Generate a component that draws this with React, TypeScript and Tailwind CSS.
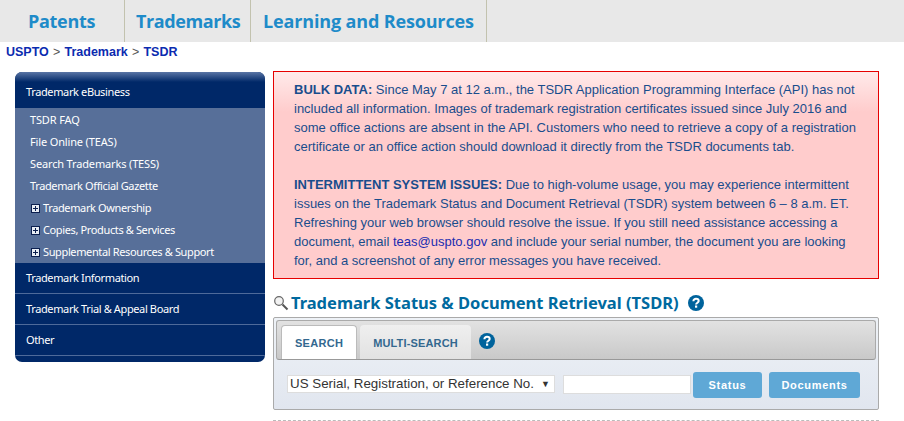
const sideFont = "font-['Noto_Sans','Open_Sans',sans-serif]";

function PlusBox() {
  return (
    <svg width="9" height="9" viewBox="0 0 9 9" className="shrink-0 ml-px mr-[3px]">
      <rect x="0.5" y="0.5" width="8" height="8" fill="#e8edf5" stroke="#0b1f4f" />
      <path d="M2 4.5H7M4.5 2V7" stroke="#0b1f4f" strokeWidth="1" />
    </svg>
  );
}

function Help({ size }: { size: number }) {
  return (
    <svg width={size} height={size} viewBox="0 0 16 16" className="shrink-0 block">
      <circle cx="8" cy="8" r="8" fill="#00639c" />
      <path d="M5.4 6.2C5.4 4.7 6.5 3.8 8 3.8S10.7 4.7 10.7 6C10.7 7.6 8.1 7.8 8.1 9.6" fill="none" stroke="#fff" strokeWidth="2" />
      <rect x="7" y="10.5" width="2.2" height="2.2" fill="#fff" />
    </svg>
  );
}

function SubLink({ label, plus, wide }: { label: string; plus?: boolean; wide?: boolean }) {
  return (
    <div className={`h-[22px] flex items-center pl-[15px] text-[11px] text-white whitespace-nowrap ${wide ? "tracking-[-0.15px]" : "tracking-[-0.37px]"}`}>
      {plus && <PlusBox />}
      <span>{label}</span>
    </div>
  );
}

function MainLink({ label }: { label: string }) {
  return (
    <div className="h-[31px] flex items-center pl-[11px] text-[11px] text-white border-b border-[#4e6a9a] tracking-[-0.37px] whitespace-nowrap">
      {label}
    </div>
  );
}

export default function App() {
  return (
    <div className="w-[904px] h-[421px] overflow-hidden bg-white font-['Liberation_Sans',Arial,sans-serif]">
      <header className="h-[42px] bg-[#e8e8e8] flex text-[#1e8bc9] text-[18px] font-bold font-['Open_Sans','Noto_Sans',sans-serif] whitespace-nowrap">
        <div className="w-[125px] border-r border-[#c2c2ae] pl-[28px] pt-[7px] leading-[28px] tracking-[-0.3px]">Patents</div>
        <div className="w-[126px] border-r border-[#c2c2ae] pl-[11px] pt-[7px] leading-[28px] tracking-[-0.4px]">Trademarks</div>
        <div className="w-[236px] border-r border-[#c2c2ae] pl-[12px] pt-[7px] leading-[28px] tracking-[-0.15px]">Learning and Resources</div>
      </header>

      <div className="h-[19px] pl-[6px] pt-[3px] text-[12.5px] leading-[15px] font-bold text-[#0b2bb0] [word-spacing:0.7px]">
        USPTO <span className="font-normal text-[#555]">&gt;</span> Trademark <span className="font-normal text-[#555]">&gt;</span> TSDR
      </div>

      <div className="flex items-start pl-[15px] pt-[10px] gap-2">
        <aside className={`w-[250px] mt-px ${sideFont} rounded-[7px] overflow-hidden bg-[#002868] pb-[6px]`}>
          <div className="h-[36px] flex items-center pl-[11px] pt-[5px] text-[11px] text-white tracking-[-0.37px] bg-[linear-gradient(#5a75a5_0px,#002868_10px)]">
            Trademark eBusiness
          </div>
          <div className="bg-[#576f99] pt-[1px]">
            <SubLink label="TSDR FAQ" wide />
            <SubLink label="File Online (TEAS)" wide />
            <SubLink label="Search Trademarks (TESS)" wide />
            <SubLink label="Trademark Official Gazette" />
            <SubLink label="Trademark Ownership" plus />
            <SubLink label="Copies, Products & Services" plus />
            <SubLink label="Supplemental Resources & Support" plus />
          </div>
          <MainLink label="Trademark Information" />
          <MainLink label="Trademark Trial & Appeal Board" />
          <MainLink label="Other" />
        </aside>

        <main className="w-[606px]">
          <div className="h-[208px] border border-[#e60000] bg-[linear-gradient(#ffeaea_0px,#ffcccc_40px)] pl-[20px] pr-[20px] pt-[8px] text-[13px] leading-[19px] text-[#194d8c]">
            <p>
              <b>BULK DATA:</b> Since May 7 at 12 a.m., the TSDR Application Programming Interface (API) has not included all information. Images of trademark registration certificates issued since July 2016 and some office actions are absent in the API. Customers who need to retrieve a copy of a registration certificate or an office action should download it directly from the TSDR documents tab.
            </p>
            <p className="mt-[19px]">
              <b>INTERMITTENT SYSTEM ISSUES:</b> Due to high-volume usage, you may experience intermittent issues on the Trademark Status and Document Retrieval (TSDR) system between 6 – 8 a.m. ET. Refreshing your web browser should resolve the issue. If you still need assistance accessing a document, email <span className="text-[#1a2bb0]">teas@uspto.gov</span> and include your serial number, the document you are looking for, and a screenshot of any error messages you have received.
            </p>
          </div>

          <div className="h-[38px] flex items-center pt-[9px] whitespace-nowrap">
            <svg width="16" height="16" viewBox="0 0 16 16" className="mt-[1px] mr-[2px] shrink-0">
              <circle cx="6" cy="6" r="4.3" fill="#f2f2f2" stroke="#666" strokeWidth="1.2" />
              <path d="M9.5 9.5L14.5 14.5" stroke="#555" strokeWidth="2" />
            </svg>
            <h1 className="text-[16.5px] font-bold text-[#006a9f] font-['Noto_Sans','Open_Sans',sans-serif] leading-[24px]">Trademark Status &amp; Document Retrieval (TSDR)</h1>
            <span className="ml-[9px]"><Help size={16} /></span>
          </div>

          <div className="h-[93px] border border-[#aaa] rounded-[2px] bg-[linear-gradient(#eef2f7,#e1e6ef)] p-[2px] pb-0">
            <div className="h-[40px] rounded-[3px] border border-[#aaa] border-b-[#999] bg-[linear-gradient(#e2e2e2,#c9c9c9)] flex items-end pl-[4px]">
              <div className="w-[76px] h-[34px] pt-[2px] bg-white border border-b-0 border-[#bbb] rounded-t-[4px] text-[11px] font-bold tracking-[0.3px] text-[#33688f] flex items-center justify-center">SEARCH</div>
              <div className="ml-[3px] w-[111px] h-[34px] pt-[2px] bg-[linear-gradient(#efefef,#e2e2e2)] rounded-t-[4px] text-[11px] font-bold tracking-[0.15px] text-[#33688f] flex items-center justify-center">MULTI-SEARCH</div>
              <span className="ml-[8px] mb-[10px]"><Help size={16} /></span>
            </div>
            <div className="flex items-start pt-[15px] pl-[11px] whitespace-nowrap">
              <div className="w-[268px] h-[18px] bg-white border border-[#ddd] text-[13.35px] leading-[16px] text-[#333] pl-[2px] flex items-center justify-between pr-[4px]">
                <span>US Serial, Registration, or Reference No.</span>
                <span className="text-[9px]">▼</span>
              </div>
              <div className="ml-[8px] w-[128px] h-[19px] bg-white border border-[#ddd]" />
              <div className="-mt-[3px] ml-[2px] w-[69px] h-[26px] rounded-[3px] bg-[#5fa8d6] text-white text-[11px] font-bold tracking-[0.7px] flex items-center justify-center">Status</div>
              <div className="ml-[7px] -mt-[3px] w-[91px] h-[26px] rounded-[3px] bg-[#5fa8d6] text-white text-[11px] font-bold tracking-[0.7px] flex items-center justify-center">Documents</div>
            </div>
          </div>

          <div className="mt-[10px] border-t border-dashed border-[#bbb]" />
        </main>
      </div>
    </div>
  );
}
